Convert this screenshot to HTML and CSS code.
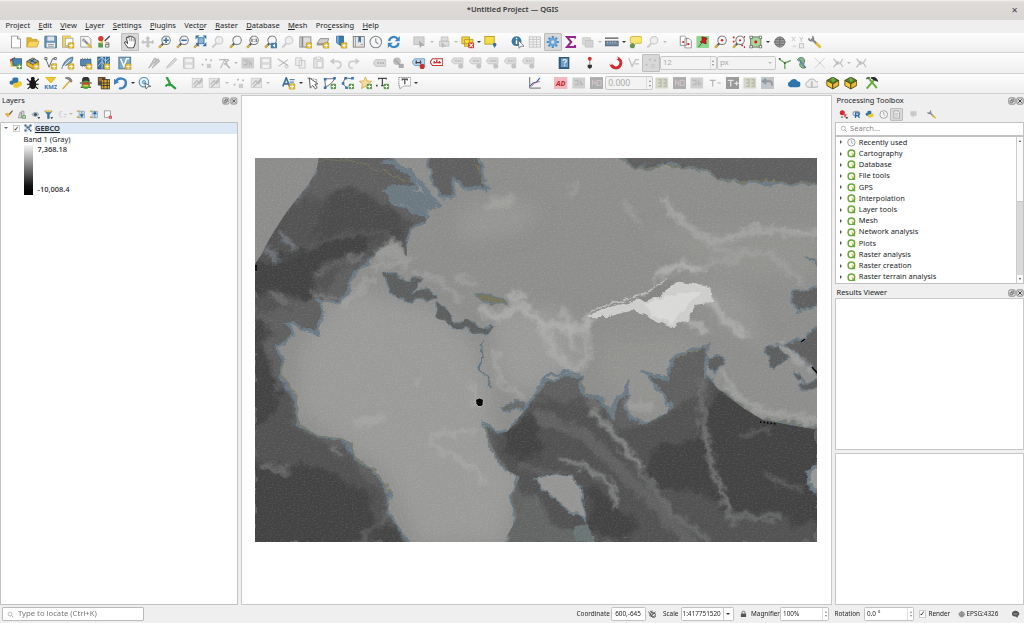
FILE: index.html
```html
<!DOCTYPE html>
<html lang="en">
<head>
<meta charset="utf-8">
<title>*Untitled Project — QGIS</title>
<link rel="stylesheet" href="styles.css">
</head>
<body>
<svg class="sprite" aria-hidden="true">
<defs>
<symbol id="plus" viewBox="0 0 16 16"><rect x="8.500" y="9" width="7" height="6.500" rx="1" fill="#e6bd2e" stroke="#b08a1a" stroke-width=".7"/><path d="M12 10v4.500M9.700 12.200h4.600" stroke="#fff" stroke-width="1.300"/></symbol>
<symbol id="gplus" viewBox="0 0 16 16"><rect x="9" y="9" width="6.500" height="6.500" rx="1.500" fill="#5c9a4c"/><path d="M12.200 10v4.500M10 12.200h4.500" stroke="#fff" stroke-width="1.200"/></symbol>
<symbol id="lens" viewBox="0 0 16 16"><path d="M6.500 9.500 1.500 14.500" stroke="#555" stroke-width="2.400"/><path d="M4.500 11.800 1.200 15" stroke="#e0b93a" stroke-width="2"/><circle cx="9.500" cy="6" r="5" fill="#f4f6f7" stroke="#77797b" stroke-width="1.200"/></symbol>
<symbol id="glens" viewBox="0 0 16 16"><path d="M6.500 9.500 1.500 14.500" stroke="#ccc" stroke-width="2.400"/><circle cx="9.500" cy="6" r="4.500" fill="#eee" stroke="#c8c8c8" stroke-width="1.200"/></symbol>
<symbol id="new" viewBox="0 0 16 16"><path d="M3 1h7l3.500 3.500V15H3z" fill="#fff" stroke="#8a8c8c"/><path d="M10 1v3.500h3.500" fill="#ddd" stroke="#8a8c8c"/></symbol>
<symbol id="open" viewBox="0 0 16 16"><path d="M1 14V3h5l1.500 2H13v3" fill="#e2b72e" stroke="#b8902a" stroke-width=".8"/><path d="M1 14 3.500 7H15.500L13 14z" fill="#f6d65e" stroke="#c39b2e" stroke-width=".8"/></symbol>
<symbol id="save" viewBox="0 0 16 16"><rect x="1" y="1" width="14" height="14" rx="1" fill="#6b96b8" stroke="#456c8c"/><rect x="4" y="1.500" width="8" height="5" fill="#dfe5e9"/><rect x="3" y="9" width="10" height="5.500" fill="#f1f1f1"/><path d="M4.500 11h7M4.500 13h7" stroke="#888"/></symbol>
<symbol id="layout" viewBox="0 0 16 16"><rect x="2" y="1" width="9" height="13" fill="#f7e8a2" stroke="#8c8c7a"/><rect x="5" y="3.500" width="9" height="9" fill="#fff" stroke="#9a9a9a"/><path d="M2 1h10v2H4v11H2z" fill="#efcf4e"/><use href="#plus"/></symbol>
<symbol id="manager" viewBox="0 0 16 16"><path d="M2 1.500h9l3 3V14H2z" fill="#f6f6f6" stroke="#999"/><path d="m5 5 9 9" stroke="#858a8e" stroke-width="2.500"/><path d="m10 10 5 5" stroke="#e2b93c" stroke-width="2.400"/><circle cx="5.500" cy="5.500" r="2" fill="#aab"/></symbol>
<symbol id="style" viewBox="0 0 16 16"><circle cx="4.500" cy="4" r="3.200" fill="#d43a2e"/><path d="m9 7 6-6" stroke="#444" stroke-width="1.500"/><rect x="1.500" y="9" width="5.500" height="5.500" fill="#4f9a4d"/><rect x="4" y="7" width="3" height="3" fill="#e4b62d"/><path d="M10 9h4v5h-4v-3h4" fill="none" stroke="#666"/></symbol>
<symbol id="hand" viewBox="0 0 16 16"><path d="M6 15C4 12 1 9 2 8s2 0 3.500 2L4 3.500c0-1.500 1.500-1.500 2 0V2c0-1.500 2-1.500 2 0 0-1.300 2-1.300 2.200.4 0-1 1.800-.8 1.800.6 1-.6 2 0 2 1.200C15 9 14 12 12 15z" fill="#fff" stroke="#333" stroke-width="1.100"/><path d="M8 2.500v4.500M10 3v4M12 4v3.500" stroke="#555" stroke-width=".7"/></symbol>
<symbol id="pan" viewBox="0 0 16 16"><path d="M8 1l3 3H9.500v3H13V5l3 3-3 3V9.500H9.500V12H11l-3 3-3-3h1.500V9.500H3V11L0 8l3-3v2h3.500V4H5z" fill="#c4c4c4"/></symbol>
<symbol id="zin" viewBox="0 0 16 16"><use href="#lens"/><path d="M9.500 2.800v6.400M6.300 6h6.400" stroke="#346ea5" stroke-width="1.800"/></symbol>
<symbol id="zout" viewBox="0 0 16 16"><use href="#lens"/><path d="M6.300 6h6.400" stroke="#346ea5" stroke-width="1.800"/></symbol>
<symbol id="full" viewBox="0 0 16 16"><path d="M6.500 9.500 1.500 14.500" stroke="#555" stroke-width="2.400"/><path d="M4.500 11.800 1.200 15" stroke="#e0b93a" stroke-width="2"/><path d="M3 0h5L3 5zM16 0h-5l5 5zM16 13h-5l5-5zM3 8l5 5H5z" fill="#3673a8"/><rect x="6" y="3" width="7" height="7" fill="#8eb4d4" stroke="#3673a8"/></symbol>
<symbol id="z11" viewBox="0 0 16 16"><use href="#lens"/><path d="M7 4v4M9.500 4.500v.8M9.500 6.800v.8M12 4v4" stroke="#333"/></symbol>
<symbol id="zlast" viewBox="0 0 16 16"><use href="#lens"/><rect x="8" y="9" width="7.500" height="6.500" fill="#3f7cb2"/><path d="m13 10-3 2.200 3 2.300z" fill="#fff"/></symbol>
<symbol id="mapview" viewBox="0 0 16 16"><rect x="1" y="2" width="13" height="12" fill="#ddd" stroke="#888"/><path d="M4 2v12" stroke="#888" stroke-width="2"/><use href="#plus"/></symbol>
<symbol id="view3d" viewBox="0 0 16 16"><path d="M1 10 5 4h10l-2 6z" fill="#cfcfcf" stroke="#888"/><path d="M1 10h12v2H1z" fill="#999"/><use href="#plus"/></symbol>
<symbol id="bookmark" viewBox="0 0 16 16"><path d="M3 1h8v13l-4-2.500L3 9z" fill="#3b7ab0" stroke="#29557c"/><path d="M3 1h2.500v10L3 9z" fill="#7bb0d8"/><use href="#plus"/></symbol>
<symbol id="bookmarks" viewBox="0 0 16 16"><rect x="1.500" y="1.500" width="13" height="12.500" fill="#e5e5e5" stroke="#777"/><path d="M4 2v12M10 11h3" stroke="#999"/><path d="M7.500 1.500h3V9L9 7.500 7.500 9z" fill="#386f9c"/></symbol>
<symbol id="clock" viewBox="0 0 16 16"><circle cx="8" cy="8" r="6.800" fill="#f6f6f6" stroke="#858a8d" stroke-width="1.300"/><path d="M8 3.500V8l3 2.500" fill="none" stroke="#858a8d" stroke-width="1.200"/></symbol>
<symbol id="refresh" viewBox="0 0 16 16"><path d="M2.500 7C3 1.500 10 .500 12.500 4.500M13.500 9C13 14.500 6 15.500 3.500 11.500" fill="none" stroke="#3b87c2" stroke-width="2.600"/><path d="M15 1v6H9zM1 15V9h6z" fill="#3b87c2"/></symbol>
<symbol id="gsel" viewBox="0 0 16 16"><rect x="1" y="2" width="12" height="9" fill="#d4d4d4" stroke="#bbb"/><path d="m7 6 1 9 2.500-2.500L14 13z" fill="#aaa"/></symbol>
<symbol id="gform" viewBox="0 0 16 16"><path d="M5 2h8v5H5zM3 7h11v6H3z" fill="#ddd" stroke="#c2c2c2"/><path d="m5 8 1 7 2-2h3z" fill="#bbb"/></symbol>
<symbol id="desel" viewBox="0 0 16 16"><path d="M1 2h9v8H1zM4 5h10v8H4z" fill="#f5d73f" stroke="#b39824"/><rect x="8.500" y="8.500" width="7" height="7" rx="1.500" fill="#d33a32"/><path d="m10 10 4 4m0-4-4 4" stroke="#fff" stroke-width="1.200"/></symbol>
<symbol id="selloc" viewBox="0 0 16 16"><rect x="1" y="1.500" width="11" height="9" fill="#f5df45" stroke="#b39824"/><path d="M12.500 15c-1-2-2-2.500-2-4a2 2 0 0 1 4.200 0c0 1.500-1.200 2-2.200 4z" fill="#3470a6"/></symbol>
<symbol id="info" viewBox="0 0 16 16"><circle cx="6.500" cy="7" r="5.800" fill="#3a76a9"/><path d="M6.500 6v4.500M6.500 3v1.800" stroke="#fff" stroke-width="1.800"/><path d="m8.500 6 1 9.500 2-2.500h4z" fill="#fff" stroke="#555" stroke-width=".8"/></symbol>
<symbol id="table" viewBox="0 0 16 16"><rect x="1.500" y="2" width="13" height="12" fill="#f4f4f4" stroke="#bbb"/><path d="M1.500 5h13M1.500 8h13M1.500 11h13M6 2v12M10 2v12" stroke="#c4c4c4"/></symbol>
<symbol id="gear" viewBox="0 0 16 16"><path d="M8 .800v14.400M.800 8h14.400M3 3l10 10M13 3 3 13" stroke="#4d8ec6" stroke-width="2.600"/><circle cx="8" cy="8" r="4.800" fill="#69a5d8"/><circle cx="8" cy="8" r="2" fill="#d8dfe5"/></symbol>
<symbol id="sigma" viewBox="0 0 16 16"><path d="M13 4V2H3.500l5 6-5 6H13v-2.500" fill="none" stroke="#94268f" stroke-width="2.400"/></symbol>
<symbol id="ruler" viewBox="0 0 16 16"><rect x="0" y="7" width="16" height="5.500" fill="#6e89a1" stroke="#4e5d6a"/><path d="M0 3.500h16" stroke="#555" stroke-width="1.600"/><path d="M3 7.500v2M6 7.500v2M9 7.500v2M12 7.500v2" stroke="#c8d6e1" stroke-width=".7"/></symbol>
<symbol id="tip" viewBox="0 0 16 16"><path d="M4 1.500h9a2.500 2.500 0 0 1 2.500 2.500v3A2.500 2.500 0 0 1 13 9.500H8.500L5 13V9.500H4A2.500 2.500 0 0 1 1.500 7V4A2.500 2.500 0 0 1 4 1.500z" fill="#f8e672" stroke="#c7ae3a"/><circle cx="4" cy="12.500" r="3" fill="#699156"/></symbol>
<symbol id="gmisc" viewBox="0 0 16 16"><path d="M2 3h9v8H2z" fill="#dcdcdc" stroke="#c6c6c6"/><path d="M5 6h9v8H5z" fill="#d2d2d2" stroke="#c0c0c0"/></symbol>
<symbol id="copyred" viewBox="0 0 16 16"><path d="M1.500 1h5L9 3.500V12H1.500zM7 4h5l2.500 2.500V15H7z" fill="#fff" stroke="#858585"/><circle cx="5" cy="8" r="1.300" fill="#d22"/><circle cx="11" cy="10.500" r="1.400" fill="#d22"/></symbol>
<symbol id="pin" viewBox="0 0 16 16"><rect x=".5" y="1" width="15" height="14" fill="#8fd68d"/><path d="m7 9-4 5" stroke="#444"/><path d="m7 2 6 1.500-1.500 3L12 10 5 8l2.500-2z" fill="#c91f22" stroke="#8d1818"/></symbol>
<symbol id="lensred" viewBox="0 0 16 16"><use href="#lens"/><circle cx="9.500" cy="6" r="1.500" fill="#d22"/></symbol>
<symbol id="lensred2" viewBox="0 0 16 16"><use href="#lens"/><circle cx="9.500" cy="6" r="1.300" fill="#d22"/><path d="M1 2.500h2M1 7.500h2M14 2h2M11 12h2M14 14h2" stroke="#d22" stroke-width="2"/></symbol>
<symbol id="extent" viewBox="0 0 16 16"><rect x="2" y="2" width="12" height="12" fill="#a8d69a" stroke="#5e7358"/><path d="M1 1h3v3H1zM12 1h3v3h-3zM1 12h3v3H1zM12 12h3v3h-3z" fill="#fff" stroke="#666"/><circle cx="8" cy="8" r="1.700" fill="#d11"/></symbol>
<symbol id="globe" viewBox="0 0 16 16"><circle cx="8" cy="8" r="6" fill="#9b9b9b" stroke="#6b6b6b"/><path d="M1 8h14M8 2v12M3 5h10M3 11h10" stroke="#6b6b6b"/></symbol>
<symbol id="xy" viewBox="0 0 16 16"><path d="m1 2 4 5m0-5-4 5M10 2l2 3 2-3M12 5v3M2 13h4" fill="none" stroke="#c2c2c2"/><rect x="10" y="10" width="5" height="5" fill="#eee" stroke="#bbb"/></symbol>
<symbol id="wrench" viewBox="0 0 16 16"><path d="m4 4 7 7" stroke="#84888a" stroke-width="2.600"/><path d="M1 3.500C1 5 2 6.500 4.500 6.500S7 3 5 1" fill="none" stroke="#84888a" stroke-width="2"/><path d="m9.500 9.500 5.500 5" stroke="#e1bb3b" stroke-width="3.300"/></symbol>
<symbol id="dsm" viewBox="0 0 16 16"><path d="m1 4 6-3 3 9-7 2z" fill="#d4493b"/><path d="M2 6h8v6H2z" fill="#e5b72b"/><path d="M4 3h11v8H5z" fill="#4784b6" stroke="#2c5c87"/><use href="#gplus"/></symbol>
<symbol id="gpkg" viewBox="0 0 16 16"><path d="m1 6 7-4 7 4-7 4z" fill="#7aa6cb" stroke="#6b5a22"/><path d="M1 6v5l7 4 7-4V6l-7 4z" fill="#ebb92f" stroke="#7d671f"/><path d="m4 4 8 4M5 7l5-4" stroke="#333"/><use href="#plus"/></symbol>
<symbol id="vec" viewBox="0 0 16 16"><path d="M2 2.500 6 13 10 3h4" fill="none" stroke="#53646c" stroke-width="1.100"/><path d="M1 1.500h2.500V4H1zM12 1.500h2.500V4H12z" fill="#fff" stroke="#555"/><use href="#plus"/></symbol>
<symbol id="feather" viewBox="0 0 16 16"><path d="M1 15C3 6 8 2 14 1c0 6-3 9-11 10" fill="#81a9c9" stroke="#48677f"/><path d="M2 13 11 4" stroke="#fff"/><use href="#plus"/></symbol>
<symbol id="chip" viewBox="0 0 16 16"><rect x="2" y="4" width="12" height="7" fill="#528ab8" stroke="#35617f"/><path d="M4 2v2M7 2v2M10 2v2M13 2v2M4 11v2M7 11v2" stroke="#777"/><use href="#plus"/></symbol>
<symbol id="mesh" viewBox="0 0 16 16"><rect x="1" y="1" width="14" height="14" fill="#3e75a6" stroke="#294f72"/><path d="m1 5 5-4 4 5 5-4M1 12l5-6 4 6 5-7M6 1v14M10 1v14" stroke="#b9d2e6" fill="none"/><use href="#plus"/></symbol>
<symbol id="virt" viewBox="0 0 16 16"><rect x="1" y="1" width="14" height="14" fill="#7da9cc" stroke="#476f91"/><path d="M3 3 7 12 10 3h3" fill="none" stroke="#fff" stroke-width="1.800"/><use href="#plus"/></symbol>
<symbol id="pencil" viewBox="0 0 16 16"><path d="M2 14 4 10 12 2l2 2-8 8z" fill="#d8d8d8" stroke="#bdbdbd"/></symbol>
<symbol id="pencils" viewBox="0 0 16 16"><path d="m2 14 7-12 3 2zM6 14l7-11 2 3z" fill="#c8c8c8" stroke="#aaa"/></symbol>
<symbol id="gsave" viewBox="0 0 16 16"><rect x="2" y="2" width="12" height="12" fill="#d9d9d9" stroke="#bbb"/><path d="M4 3h8v4H4zM4 10h8v4H4z" fill="#f2f2f2"/></symbol>
<symbol id="gdots" viewBox="0 0 16 16"><path d="M2 9h2v2H2zM6 3h2v2H6zM12 4h2v2h-2z" fill="#b5b5b5"/><rect x="8" y="9" width="5" height="5" fill="#ccc"/></symbol>
<symbol id="gnode" viewBox="0 0 16 16"><path d="M1 4h11M3 14 8 4l3 6M13 4l-6 6" stroke="#bcbcbc" stroke-width="1.300" fill="none"/><path d="m8 8 6 6" stroke="#bbb" stroke-width="2"/></symbol>
<symbol id="cut" viewBox="0 0 16 16"><path d="M2 3 14 11M14 4 3 12" stroke="#bbb" stroke-width="1.300"/><circle cx="12.500" cy="12" r="1.800" fill="none" stroke="#bbb"/></symbol>
<symbol id="gcopy" viewBox="0 0 16 16"><path d="M2 2h7v9H2zM6 5h7v9H6z" fill="#efefef" stroke="#c2c2c2"/></symbol>
<symbol id="gpaste" viewBox="0 0 16 16"><path d="M2 2h11v12H2z" fill="#e4e4e4" stroke="#c2c2c2"/><path d="M5 1h5v3H5zM6 6h6v7H6z" fill="#f6f6f6" stroke="#c6c6c6"/></symbol>
<symbol id="gundo" viewBox="0 0 16 16"><path d="M3 6h7q4 0 4 4t-5 4" fill="none" stroke="#ccc" stroke-width="2"/><path d="M6 2 1 6l5 4z" fill="#c8c8c8"/></symbol>
<symbol id="gredo" viewBox="0 0 16 16"><path d="M13 6H6q-4 0-4 4t5 4" fill="none" stroke="#d0d0d0" stroke-width="2"/><path d="m10 2 5 4-5 4z" fill="#ccc"/></symbol>
<symbol id="gtag" viewBox="0 0 16 16"><path d="m0 8 3-4h12v8H3z" fill="#dadada" stroke="#c3c3c3"/><path d="M5 8h8" stroke="#aaa" stroke-width="2" stroke-dasharray="2 1"/></symbol>
<symbol id="gtag2" viewBox="0 0 16 16"><path d="m0 6 3-4h11v7H3z" fill="#dcdcdc" stroke="#c8c8c8"/><path d="M5 5.500h7" stroke="#bbb" stroke-width="2" stroke-dasharray="2 1"/><circle cx="11.500" cy="11.500" r="3" fill="#c4c4c4"/></symbol>
<symbol id="ball" viewBox="0 0 16 16"><circle cx="7" cy="6" r="4.500" fill="#bbb"/><path d="M9 9h6v5H9z" fill="#aaa"/><path d="M4 4l6 6" stroke="#888"/></symbol>
<symbol id="tagblue" viewBox="0 0 16 16"><path d="m0 7 3-4h12v8H3z" fill="#b9d6ef" stroke="#6996ba"/><path d="M4 7.500h7M5 5v4M10 5v4" stroke="#444" stroke-width="1.500"/><circle cx="12" cy="12" r="3" fill="#c53232"/></symbol>
<symbol id="tagred" viewBox="0 0 16 16"><path d="m0 7 3-4h12v8H3z" fill="#fff" stroke="#c93030" stroke-width="1.200"/><path d="M4 7.500h9M5 5.500v3M8 4v4M11 5.500v3" stroke="#c93030" stroke-width="1.500"/></symbol>
<symbol id="help" viewBox="0 0 16 16"><path d="M2 1h12.500v14H2z" fill="#2e5778"/><path d="M4.500 2.500H13V13H4.500z" fill="#6d9fca"/><path d="M7 5.500c0-2 4-2 4 0 0 1.500-2 1.300-2 3M9 10v1.500" stroke="#fff" stroke-width="1.200" fill="none"/></symbol>
<symbol id="pole" viewBox="0 0 16 16"><path d="M8 4v9" stroke="#999" stroke-width="1.300"/><circle cx="8" cy="3" r="2.300" fill="#d03434"/><path d="M5.500 10h5v3l-2.500 2-2.500-2z" fill="#333"/></symbol>
<symbol id="magnet" viewBox="0 0 16 16"><path d="M2 9c2 5 8 7 11 2s-1-8-4-9" fill="none" stroke="#cc2c30" stroke-width="3.500"/><path d="m1 9 3-1M8 3l2-2" stroke="#eee" stroke-width="3"/></symbol>
<symbol id="gvec" viewBox="0 0 16 16"><path d="M2 2 6 12 10 4h4M9 9h5" fill="none" stroke="#c4c4c4" stroke-width="1.600"/></symbol>
<symbol id="gcross" viewBox="0 0 16 16"><path d="M2 2 14 14M14 2 2 14" stroke="#cbcbcb"/><path d="M7 7h2v2H7z" fill="#ccc"/></symbol>
<symbol id="gx2" viewBox="0 0 16 16"><path d="m3 3 4 5h4l3-5M3 13l4-5M11 8l3 5" fill="none" stroke="#c2c2c2" stroke-width="1.500"/><path d="M6 6h3v4H6z" fill="#bdbdbd"/></symbol>
<symbol id="topo" viewBox="0 0 16 16"><path d="M8 15V8L1 3M8 8l7-3" fill="none" stroke="#6eab63" stroke-width="1.700"/><path d="M1 2h2v2H1zM7 7h2v2H7z" fill="#444"/></symbol>
<symbol id="trace" viewBox="0 0 16 16"><path d="M3 4c3-5 10-2 8 3s0 5 2 6c-4 3-9-1-7-5S3 7 3 4z" fill="#8bb680" stroke="#526f59"/><path d="m5 4 7 9" stroke="#4888bb" stroke-width="1.500"/></symbol>
<symbol id="python" viewBox="0 0 16 16"><path d="M4 5V3c0-2 7-2 7 0v4c0 1.500-6 0-6 3H3C0 10 0 5 3 5h5" fill="#3772a4"/><path d="M12 8v4c0 2-7 2-7 0V9c0-1.500 6-.5 6-3h2c3 0 3 6 0 6H8" fill="#edc936"/></symbol>
<symbol id="bug" viewBox="0 0 16 16"><ellipse cx="8" cy="9.500" rx="4" ry="5.500" fill="#181818"/><circle cx="8" cy="3" r="2.300" fill="#181818"/><path d="M1 3l4 4M15 3l-4 4M1 9.500h14M2 15l4-4M14 15l-4-4" stroke="#181818" stroke-width="1.300"/></symbol>
<symbol id="kmz" viewBox="0 0 16 16"><path d="m2 1 12 0-6 7z" fill="#f4c822" stroke="#d5a817"/><text x="8" y="15.500" text-anchor="middle" class="kmz">KMZ</text></symbol>
<symbol id="hammer" viewBox="0 0 16 16"><path d="m2 15 8-9" stroke="#ddb247" stroke-width="2"/><path d="M5 2c4-2 7 0 8 4L11.500 7 9 4z" fill="#8c8c88" stroke="#6f6f6c"/></symbol>
<symbol id="beetle" viewBox="0 0 16 16"><circle cx="8" cy="5" r="4.500" fill="#333"/><path d="M1 8h14M2 13h12" stroke="#222" stroke-width="1.400"/><ellipse cx="8" cy="10" rx="5" ry="5" fill="#4aa335"/><path d="M4 7h8v3H4z" fill="#c5452f"/><path d="M5 11h6" stroke="#e1c638" stroke-width="2"/></symbol>
<symbol id="raster" viewBox="0 0 16 16"><path d="M1 1h9v10H1z" fill="#554b3d"/><path d="M5 4h10v11H5z" fill="#e2a92c" stroke="#333"/><path d="M5 8h10M5 11h10M8 4v11M12 4v11" stroke="#333"/><path d="M2 2h4v4H2z" fill="#a9683c"/></symbol>
<symbol id="bluearrow" viewBox="0 0 16 16"><path d="M2.500 6C5 1 14 2 14 8s-6 7-8 6" fill="none" stroke="#3e82c0" stroke-width="2.800"/><path d="M0 3v7l6-3z" fill="#3e82c0"/></symbol>
<symbol id="target" viewBox="0 0 16 16"><circle cx="7" cy="7" r="5.500" fill="none" stroke="#5294c8" stroke-width="1.500"/><circle cx="7" cy="7" r="2" fill="#a8c9e4" stroke="#5294c8"/><path d="m8 8 1.500 7 2-2.500 3.500-.5z" fill="#fff" stroke="#555"/></symbol>
<symbol id="plant" viewBox="0 0 16 16"><path d="M3 1c2 3 4 6 4.500 10M8 10l6 5M7.500 11C5 9 3 10 2 12" fill="none" stroke="#2f9e3e" stroke-width="2.600"/></symbol>
<symbol id="gedit" viewBox="0 0 16 16"><rect x="1.500" y="2.500" width="12" height="11" fill="#e6e6e6" stroke="#ccc"/><path d="m4 13 9-10M3 10l4-5 3 4 3-4" fill="none" stroke="#bababa" stroke-width="1.400"/></symbol>
<symbol id="anno" viewBox="0 0 16 16"><path d="M1 12 5 2l4 10M3 9h4.500" stroke="#3b719f" stroke-width="2" fill="none"/><path d="M9 4h6M9 7h5" stroke="#5a8bb2" stroke-width="1.600"/><use href="#plus"/></symbol>
<symbol id="selarrow" viewBox="0 0 16 16"><path d="m2 2 11 2-3 9z" fill="none" stroke="#888" stroke-dasharray="2 1"/><path d="m4 2 1 12 3-3 3 4 2-1.500-2.500-4L14 9z" fill="#fff" stroke="#444"/></symbol>
<symbol id="polyan" viewBox="0 0 16 16"><path d="M2 3h12l-5 6-6 4z" fill="#fff" stroke="#556" /><path d="M1 2h3v3H1zM12 1h3v3h-3zM1 12h3v3H1z" fill="#2c71b0"/><use href="#gplus"/></symbol>
<symbol id="linean" viewBox="0 0 16 16"><path d="M13 3 5 2 2 9l5 5" fill="none" stroke="#556"/><path d="M12 1h3v3h-3zM4 1h3v3H4zM1 7h3v3H1zM5 12h3v3H5z" fill="#2c71b0"/><use href="#gplus"/></symbol>
<symbol id="star" viewBox="0 0 16 16"><path d="m7.500 1 2 4.500 5 .5-3.800 3.500 1 5-4.200-2.500-4.500 2.500 1-5L.500 6l5-.5z" fill="#f4dc9c" stroke="#d4a94a"/><use href="#gplus"/></symbol>
<symbol id="textan" viewBox="0 0 16 16"><path d="M3 4V2.500h9V4M7.500 2.500V11M6 11h3" fill="none" stroke="#444" stroke-width="1.400"/><path d="M0 10h2v2H0z" fill="#555"/><use href="#gplus"/></symbol>
<symbol id="balloon" viewBox="0 0 16 16"><path d="M1 1.500h14v10H7L2 15v-3.500H1z" fill="#fafafa" stroke="#888" stroke-dasharray="2 .6"/><path d="M5 5V3.500h6V5M8 3.500v6" fill="none" stroke="#444" stroke-width="1.400"/></symbol>
<symbol id="chart" viewBox="0 0 16 16"><path d="M2 1v13h13" fill="none" stroke="#555"/><path d="m2 12 4-4 4-1 4-5" fill="none" stroke="#3b68ad" stroke-width="1.400"/><path d="m4 12 4-4 6-2" fill="none" stroke="#c25870"/></symbol>
<symbol id="ad" viewBox="0 0 16 16"><rect x="0" y="1" width="16" height="14" fill="#f1b9bd"/><text x="8" y="11.300" text-anchor="middle" class="ad">AD</text></symbol>
<symbol id="gbox" viewBox="0 0 16 16"><rect x=".5" y="1.500" width="15" height="13" fill="#cfcfcf"/><path d="M3 5h4v5H3M10 5v6M9 6l4 4" stroke="#b8b8b8" fill="none" stroke-width="1.500"/></symbol>
<symbol id="gbox2" viewBox="0 0 16 16"><rect x="0" y="1" width="16" height="14" fill="#adadad"/><path d="M3 11V5l4 5 0-5M9 5h4v6H9z" stroke="#cfc2c4" fill="none" stroke-width="1.300"/></symbol>
<symbol id="gbox3" viewBox="0 0 16 16"><rect x=".5" y="1.500" width="15" height="13" fill="#d4d7c5"/><path d="M4 4h3v8H4M10 4h3v8h-3M4 8h3M10 8h3" stroke="#b8bba9" fill="none" stroke-width="1.500"/></symbol>
<symbol id="tminus" viewBox="0 0 16 16"><path d="M2 5h7M5.500 5v7M11 8h4" stroke="#b4b4b4" stroke-width="1.400"/></symbol>
<symbol id="tplus" viewBox="0 0 16 16"><rect y="1" width="16" height="14" fill="#999"/><path d="M2 5h7M5.500 5v7M10 8.500h5M12.500 6v5" stroke="#e4e4e4" stroke-width="1.500"/></symbol>
<symbol id="gback" viewBox="0 0 16 16"><rect y="1" width="16" height="14" fill="#bfc5c9"/><path d="M2 6h8q3 0 3 5M6 3 2 6l4 3" fill="none" stroke="#90989d" stroke-width="2.200"/></symbol>
<symbol id="cloud" viewBox="0 0 16 16"><path d="M4 13a3.500 3.500 0 0 1-.5-6.800A5 5 0 0 1 12.500 6a3.500 3.500 0 0 1 0 7z" fill="#2f75ad"/></symbol>
<symbol id="gcloud" viewBox="0 0 16 16"><path d="M4 13a3.500 3.500 0 0 1-.5-6.800A5 5 0 0 1 12.500 6a3.500 3.500 0 0 1 0 7z" fill="#eee" stroke="#c6c6c6" stroke-width="1.500"/><path d="M8 6v7" stroke="#bbb" stroke-width="2"/></symbol>
<symbol id="box" viewBox="0 0 16 16"><path d="m1 5 7-4 7 4-7 4z" fill="#56802b" stroke="#4b3a16"/><path d="M1 5v6l7 4V9z" fill="#f1ca37" stroke="#4b3a16"/><path d="M15 5v6l-7 4V9z" fill="#e2b932" stroke="#4b3a16"/><path d="m8 1 3 4-3 2-2-3z" fill="#5db43c"/></symbol>
<symbol id="tools" viewBox="0 0 16 16"><path d="M2 14.500 11 4M4 2l10 12" stroke="#69ab3c" stroke-width="2.300"/><path d="m1.500 3 4-2" stroke="#555" stroke-width="2"/><path d="M7 2c3-2 6-1 8 4l-5-2z" fill="#272727" stroke="#272727"/></symbol>
<symbol id="brush" viewBox="0 0 16 16"><path d="m1 6 6 7L9 8z" fill="#d95b38"/><path d="M3 6c3-3 6 0 7 3l-4 4z" fill="#eabc31"/><path d="m9 8 6-7" stroke="#7b5524" stroke-width="2.200"/></symbol>
<symbol id="group" viewBox="0 0 16 16"><path d="M2 14 5 4h2v10M8 14V2h4v10M2 14h10" fill="#ddd" stroke="#777"/><use href="#gplus"/></symbol>
<symbol id="eye" viewBox="0 0 16 16"><path d="M1 8q7-8 13 0-6 7-13 0z" fill="#b9cad8" stroke="#728da3"/><circle cx="7.500" cy="8" r="2.800" fill="#3a5063"/><path d="M11 13h5l-2.500 3z" fill="#222"/></symbol>
<symbol id="filter" viewBox="0 0 16 16"><path d="M1 2h13L9 8v7H6V8z" fill="#347aae" stroke="#275a80"/><path d="M2 1.500h11V4H2z" fill="#edc83c"/><path d="M11 13h5l-2.500 3z" fill="#222"/></symbol>
<symbol id="epsilon" viewBox="0 0 16 16"><path d="M7 3C1 1 1 7 5 7 0 8 2 14 7 12M10 8h5M10 12h4" fill="none" stroke="#c6c6c6" stroke-width="1.400"/></symbol>
<symbol id="expand" viewBox="0 0 16 16"><path d="M1 2h5M1 13h5" stroke="#caa53b" stroke-width="2.500"/><rect x="5" y="2" width="10" height="12" fill="#cbdce9" stroke="#7898b0"/><path d="M10 2v7M7 8h6l-3 5z" fill="#276ba2" stroke="#276ba2"/></symbol>
<symbol id="collapse" viewBox="0 0 16 16"><path d="M1 2h5M1 13h5" stroke="#caa53b" stroke-width="2.500"/><rect x="5" y="2" width="10" height="12" fill="#cbdce9" stroke="#7898b0"/><path d="M10 14V7M7 7h6l-3-5z" fill="#276ba2" stroke="#276ba2"/></symbol>
<symbol id="remove" viewBox="0 0 16 16"><rect x="2" y="1.500" width="11" height="11.500" fill="#fafafa" stroke="#888" stroke-width="1.300"/><rect x="10" y="10" width="6" height="5.500" rx="1" fill="#ce4949"/><path d="M11.500 12.700h3" stroke="#fff"/></symbol>
<symbol id="float" viewBox="0 0 8 8"><rect x=".8" y=".8" width="6.400" height="6.400" rx="1.300" fill="#e4e4e4" stroke="#777" stroke-width=".8"/><path d="M2.200 5.800V3.600h2.200v2.200zM3.600 3.400V2.200h2.200v2.200H4.600" fill="none" stroke="#555" stroke-width=".7"/></symbol>
<symbol id="close" viewBox="0 0 8 8"><rect x=".8" y=".8" width="6.400" height="6.400" rx="1.300" fill="#ddd" stroke="#777" stroke-width=".8"/><path d="m2.300 2.300 3.400 3.400m0-3.400L2.300 5.700" stroke="#444"/></symbol>
<symbol id="q" viewBox="0 0 16 16"><circle cx="8" cy="8" r="6" fill="#fff" stroke="#6aa637" stroke-width="2.800"/><path d="m10 10 4.500 5" stroke="#6aa637" stroke-width="3"/><path d="M7 7h4.500v4.500z" fill="#e5c54a"/></symbol>
<symbol id="recent" viewBox="0 0 16 16"><circle cx="8" cy="8" r="6.800" fill="#fafafa" stroke="#909090" stroke-width="1.600"/><path d="M8 4v4.500l3 1.500" fill="none" stroke="#909090" stroke-width="1.300"/></symbol>
<symbol id="models" viewBox="0 0 16 16"><circle cx="5.500" cy="5" r="4.500" fill="#d22c32"/><path d="M8 7h5l-1 6H9z" fill="#d7626a"/><path d="M3 11h4v3H3z" fill="#999"/><path d="M11 13h5l-2.500 3z" fill="#222"/></symbol>
<symbol id="rlang" viewBox="0 0 16 16"><ellipse cx="7.500" cy="6.500" rx="6" ry="4" fill="none" stroke="#9ba2ab" stroke-width="2"/><path d="M6 14V5h5q3 3-1 4.500L6 9.500m4 0 3 4.500" fill="none" stroke="#246bb0" stroke-width="2.200"/></symbol>
<symbol id="doc" viewBox="0 0 16 16"><path d="M3 1.500h7l3 3V14.500H3z" fill="#eee" stroke="#888"/><path d="M5 6h6M5 8.500h6M5 11h6" stroke="#aaa"/></symbol>
<symbol id="gbubble" viewBox="0 0 16 16"><path d="M2 2h11v8H8v4L5 10H2z" fill="#c9c9c9"/></symbol>
<symbol id="search" viewBox="0 0 16 16"><circle cx="7" cy="7" r="4.500" fill="none" stroke="#999" stroke-width="1.400"/><path d="m10.500 10.500 4 4" stroke="#999" stroke-width="1.800"/></symbol>
<symbol id="rast" viewBox="0 0 16 16"><path d="M1 1h14v14H1z" fill="#dbe6ee"/><path d="M1 1h4v4H1zM5 5h4v4H5zM11 1h4v4h-4zM9 9h3v3H9zM1 11h4v4H1zM12 12h3v3h-3zM9 5h3v2H9z" fill="#385d7a"/></symbol>
<symbol id="lock" viewBox="0 0 16 16"><rect x="2" y="7" width="12" height="8" rx="1" fill="#555"/><path d="M4.500 7V5a3.500 3.500 0 0 1 7 0v2" fill="none" stroke="#555" stroke-width="1.800"/></symbol>
<symbol id="mouse" viewBox="0 0 16 16"><path d="m1 3 6 10M4 2l9 5M8 1 3 11M5 13l9-10M8 14l6-4" stroke="#444" stroke-width="1.600"/><circle cx="11" cy="10" r="4" fill="none" stroke="#555" stroke-width="1.500"/></symbol>
<symbol id="crs" viewBox="0 0 16 16"><path d="M8 1v14M0 8h16" stroke="#666"/><circle cx="8" cy="8" r="5.500" fill="#bbb" stroke="#666"/><path d="M3 8h10M8 3v10M4 5h8M4 11h8" stroke="#666"/></symbol>
<symbol id="msg" viewBox="0 0 16 16"><path d="M2 4q6-5 12 0 3 4-1 7l-2 4-2-3Q-1 13 2 4z" fill="#555"/><path d="M4 6.500h8M4 8.800h7" stroke="#bbb" stroke-width=".8"/></symbol>
</defs>
</svg>

<div class="window">
<header class="titlebar"><span class="title">*Untitled Project — QGIS</span><span class="winclose">✕</span></header>
<nav class="menubar"><span>Pro<u>j</u>ect</span><span><u>E</u>dit</span><span><u>V</u>iew</span><span><u>L</u>ayer</span><span><u>S</u>ettings</span><span><u>P</u>lugins</span><span>Vect<u>o</u>r</span><span><u>R</u>aster</span><span><u>D</u>atabase</span><span><u>M</u>esh</span><span>Pro<u>c</u>essing</span><span><u>H</u>elp</span></nav>

<div class="toolbar">
<div class="group"><svg><use href="#new"/></svg><svg><use href="#open"/></svg><svg><use href="#save"/></svg><svg><use href="#layout"/></svg><svg><use href="#manager"/></svg><svg><use href="#style"/></svg></div>
<div class="group wide"><svg class="pressed"><use href="#hand"/></svg><svg><use href="#pan"/></svg><svg><use href="#zin"/></svg><svg><use href="#zout"/></svg><svg><use href="#full"/></svg><svg><use href="#glens"/></svg><svg><use href="#lens"/></svg><svg><use href="#z11"/></svg><svg><use href="#zlast"/></svg><svg><use href="#glens"/></svg><svg><use href="#mapview"/></svg><svg><use href="#view3d"/></svg><svg><use href="#bookmark"/></svg><svg><use href="#bookmarks"/></svg><svg><use href="#clock"/></svg><svg><use href="#refresh"/></svg></div>
<div class="group wide"><svg><use href="#gsel"/></svg><i class="drop off"></i><svg><use href="#gform"/></svg><i class="drop off"></i><svg><use href="#desel"/></svg><i class="drop"></i><svg><use href="#selloc"/></svg></div>
<div class="group wide"><svg><use href="#info"/></svg><svg><use href="#table"/></svg><svg class="pressed"><use href="#gear"/></svg><svg><use href="#sigma"/></svg><svg><use href="#gmisc"/></svg><i class="drop off"></i><svg><use href="#ruler"/></svg><i class="drop"></i><svg><use href="#tip"/></svg><svg><use href="#glens"/></svg><i class="drop off"></i></div>
<div class="group wide"><svg><use href="#copyred"/></svg><svg><use href="#pin"/></svg><svg><use href="#lensred"/></svg><svg><use href="#lensred2"/></svg><svg><use href="#extent"/></svg><i class="drop"></i><svg><use href="#globe"/></svg><svg><use href="#xy"/></svg><svg><use href="#wrench"/></svg></div>
</div>

<div class="toolbar">
<div class="group"><svg><use href="#dsm"/></svg><svg><use href="#gpkg"/></svg><svg><use href="#vec"/></svg><svg><use href="#feather"/></svg><svg><use href="#chip"/></svg><svg><use href="#mesh"/></svg></div>
<div class="group near"><svg><use href="#virt"/></svg></div>
<div class="group wider"><svg><use href="#pencils"/></svg><svg><use href="#pencil"/></svg><svg><use href="#gsave"/></svg><svg><use href="#gdots"/></svg><svg><use href="#gnode"/></svg><i class="drop off"></i><svg><use href="#gbox"/></svg><svg><use href="#gsave"/></svg><svg><use href="#cut"/></svg><svg><use href="#gcopy"/></svg><svg><use href="#gpaste"/></svg><svg><use href="#gundo"/></svg><svg><use href="#gredo"/></svg></div>
<div class="group wide"><svg><use href="#gtag"/></svg><svg><use href="#ball"/></svg></div>
<div class="group near"><svg><use href="#tagblue"/></svg><svg><use href="#tagred"/></svg></div>
<div class="group near"><svg><use href="#gtag2"/></svg><svg><use href="#gtag2"/></svg><svg><use href="#gtag2"/></svg><svg><use href="#gtag2"/></svg><svg><use href="#gtag2"/></svg></div>
<div class="group apart"><svg><use href="#help"/></svg></div>
<div class="group wide"><svg><use href="#pole"/></svg></div>
<div class="group wide"><svg><use href="#magnet"/></svg><svg><use href="#gvec"/></svg><svg class="pressed"><use href="#gdots"/></svg></div>
<div class="spin tolerance"><span>12</span><i class="arrows"></i></div><div class="spin units"><span>px</span><i class="drop off"></i></div>
<div class="group"><svg><use href="#topo"/></svg><svg><use href="#trace"/></svg><svg><use href="#gcross"/></svg><svg><use href="#gx2"/></svg><i class="drop off"></i><svg><use href="#gx2"/></svg></div>
</div>

<div class="toolbar">
<div class="group"><svg><use href="#python"/></svg><svg><use href="#bug"/></svg><svg><use href="#kmz"/></svg><svg><use href="#hammer"/></svg><svg><use href="#beetle"/></svg><svg><use href="#raster"/></svg><svg><use href="#bluearrow"/></svg><i class="drop"></i><svg><use href="#target"/></svg></div>
<div class="group wide"><svg><use href="#plant"/></svg></div>
<div class="group wide"><svg><use href="#gedit"/></svg><svg><use href="#gedit"/></svg><i class="drop off"></i><svg><use href="#gdots"/></svg><svg><use href="#gedit"/></svg><i class="drop off"></i></div>
<div class="group wide"><svg><use href="#anno"/></svg><i class="drop"></i><svg><use href="#selarrow"/></svg><svg><use href="#polyan"/></svg><svg><use href="#linean"/></svg><svg><use href="#star"/></svg><svg><use href="#textan"/></svg></div>
<div class="group near"><svg><use href="#balloon"/></svg><i class="drop"></i></div>
<div class="group profile"><svg><use href="#chart"/></svg></div>
<div class="group wide"><svg><use href="#ad"/></svg><svg><use href="#gbox"/></svg><svg><use href="#gbox2"/></svg></div>
<div class="spin elevation"><span>0.000</span><i class="arrows"></i></div>
<div class="group"><svg><use href="#gbox3"/></svg><svg><use href="#gbox2"/></svg><svg><use href="#gbox"/></svg><svg><use href="#tminus"/></svg><svg><use href="#tplus"/></svg><svg><use href="#gbox3"/></svg><svg><use href="#gback"/></svg></div>
<div class="group wide"><svg><use href="#cloud"/></svg><svg><use href="#gcloud"/></svg></div>
<div class="group near"><svg><use href="#box"/></svg><svg><use href="#box"/></svg></div>
<div class="group near"><svg><use href="#tools"/></svg></div>
</div>

<main class="workspace">
<section class="dock layers">
<div class="dockhead"><span>Layers</span><svg><use href="#float"/></svg><svg><use href="#close"/></svg></div>
<div class="docktools"><svg><use href="#brush"/></svg><svg><use href="#group"/></svg><svg><use href="#eye"/></svg><svg><use href="#filter"/></svg><svg><use href="#epsilon"/></svg><i class="drop off"></i><svg><use href="#expand"/></svg><svg><use href="#collapse"/></svg><svg><use href="#remove"/></svg></div>
<div class="layertree">
<div class="layer"><i class="open"></i><span class="check">✓</span><svg><use href="#rast"/></svg><span class="name">GEBCO</span></div>
<div class="band">Band 1 (Gray)</div>
<div class="legend"><i class="ramp"></i><div class="range"><span>7,368.18</span><span>-10,008.4</span></div></div>
</div>
</section>

<section class="canvas">
<svg class="map" viewBox="255 158 562 384.500" preserveAspectRatio="none">
<defs>
<filter id="rough" x="255" y="158" width="562" height="385" filterUnits="userSpaceOnUse" color-interpolation-filters="sRGB"><feTurbulence type="fractalNoise" baseFrequency=".08" numOctaves="4" seed="4"/><feDisplacementMap in="SourceGraphic" scale="11" xChannelSelector="R" yChannelSelector="G"/></filter>
<filter id="soft" x="255" y="158" width="562" height="385" filterUnits="userSpaceOnUse" color-interpolation-filters="sRGB"><feGaussianBlur stdDeviation="2" result="b"/><feTurbulence type="fractalNoise" baseFrequency=".1" numOctaves="4" seed="9" result="n"/><feDisplacementMap in="b" in2="n" scale="14" xChannelSelector="R" yChannelSelector="G"/></filter>
<filter id="melt" x="255" y="158" width="562" height="385" filterUnits="userSpaceOnUse" color-interpolation-filters="sRGB"><feGaussianBlur stdDeviation="2.500" result="b"/><feTurbulence type="fractalNoise" baseFrequency=".07" numOctaves="4" seed="5" result="n"/><feDisplacementMap in="b" in2="n" scale="18" xChannelSelector="R" yChannelSelector="G"/></filter>
<filter id="haze" x="255" y="158" width="562" height="385" filterUnits="userSpaceOnUse"><feGaussianBlur stdDeviation="9"/></filter>
<filter id="snow" x="255" y="158" width="562" height="385" filterUnits="userSpaceOnUse" color-interpolation-filters="sRGB"><feGaussianBlur stdDeviation=".7" result="b"/><feTurbulence type="fractalNoise" baseFrequency=".12" numOctaves="3" seed="6" result="n"/><feDisplacementMap in="b" in2="n" scale="7" xChannelSelector="R" yChannelSelector="G"/></filter>
<filter id="grain" x="255" y="158" width="562" height="385" filterUnits="userSpaceOnUse"><feTurbulence type="fractalNoise" baseFrequency=".5 .7" numOctaves="2" seed="2"/><feColorMatrix values="0 0 0 0 1  0 0 0 0 1  0 0 0 0 1  1.200 0 0 0 -.55"/></filter>
<clipPath id="west"><path d="M319 158H383L397 165 414 178 416 188 400 186 385 190 400 208 413 213 428 212 425 222 410 228 407 234 407 257 390 243 378 250 373 260 360 267 350 283 347 293 338 303 317 302 323 313 318 333 287 323 295 337 275 345 283 360 282 378 292 395 298 425 317 435 347 442 353 458 373 470 388 492 388 515 413 543H255V264L270 238 290 206 314 174z"/></clipPath>
<clipPath id="indian"><path d="M485 423 497 433 507 432 523 412 537 395 545 382 563 377 580 377 582 392 597 395 610 412 627 385 628 415 642 425 667 413 670 405 645 373 670 378 673 358 708 345 707 375 717 388 743 408 763 420 817 430V543H503L517 518 510 498 520 477 503 468 490 448z"/></clipPath>
</defs>
<rect x="255" y="158" width="562" height="385" fill="#8e8f8d"/>
<g filter="url(#haze)" fill="#9f9f9d">
<path d="M300 350 350 290 430 310 470 340 490 390 490 430 520 480 500 543H420L385 470 300 410z" opacity=".75"/>
<path d="M495 310h70l15 55-60 30-25-30z" opacity=".8"/>
<path d="M600 340h90l10 20-50 50-50-30zM640 230h177v50L720 275z" opacity=".3"/>
<path d="M460 210l50-12 30 14-20 20-60 10zM690 280l50 10 30 60-50-30z" opacity=".5"/>
</g>
<g filter="url(#rough)">
<g fill="#606060" stroke="#6b7a84" stroke-width="3">
<path d="M319 150H383L397 165 414 178 416 188 400 186 385 190 400 208 413 213 428 212 425 222 410 228 407 234 407 257 390 243 378 250 373 260 360 267 350 283 347 293 338 303 317 302 323 313 318 333 287 323 295 337 275 345 283 360 282 378 292 395 298 425 317 435 347 442 353 458 373 470 388 492 388 515 413 552H240V274L270 240 290 208 314 176z"/>
<path d="M427 150H477L487 188 463 187 453 180 453 197 443 197 430 180z"/>
<path d="M615 150 633 166 653 169 670 163 697 169 723 179 760 183H830V150z"/>
<path d="M485 423 497 433 507 432 523 412 537 395 545 382 563 377 580 377 582 392 597 395 610 412 627 385 628 415 642 425 667 413 670 405 645 373 670 378 673 358 708 345 707 375 717 388 743 408 763 420 830 430V555H503L517 518 510 498 520 477 503 468 490 448z"/>
<path d="M790 293 830 284V303L797 312zM780 344 803 338 830 318V385L805 362 790 349z" stroke-width="2"/>
</g>
<g fill="none" stroke="#7c7959" stroke-width="1" opacity=".9">
<path d="M322 160H350L372 167 392 174 412 182M280 228 300 212 310 202"/>
<path d="M284 362 284 378 294 395 299 424 318 434 348 441 355 458 374 469 390 491"/>
<path d="M474 160 486 187M622 160 634 166 655 169 669 164 697 169 725 180 817 183"/>
<path d="M581 378 584 392 598 396 612 410 627 388M674 360 707 347M719 389 743 407 763 419 817 428"/>
<path d="M486 425 491 448 504 466 520 476M512 498 519 520"/>
</g>
<g stroke="#6b7a84" stroke-width="1.300" fill="#5d5e5e">
<path d="M382 273h15l8 10 12-9 6 6-10 15 14-8 10 10-24 5-20-5z"/>
<path d="M437 302 447 310 453 320 470 322 495 329 490 333 470 332 450 325 437 316z"/>
<path d="M477 295 495 294 505 300 507 306 490 303z" fill="#77755b"/>
<path d="M498 405 510 401 527 403 524 410 505 410z" fill="#666b69"/>
<path d="M765 350l15-4 6 12-11 11-7-8zM792 371l9 4 4 7-13-6zM797 384l25-8v13l-16 3zM707 360l12-4 6 5-12 12z"/>
</g>
<path d="M482 341 480 352 480 367 487 378 492 388" stroke="#667680" stroke-width="2" fill="none"/>
<path d="M804 256 820 260V267z" fill="#68777f"/>
<path d="M385 190 400 186 430 195 436 208 414 212 400 205z" fill="#6c7981"/>
<path d="M384 161 410 172 440 207M583 394 600 398 612 414 626 388" fill="none" stroke="#6c7b84" stroke-width="4.500"/>
<path d="M537 389 550 373 578 374" fill="none" stroke="#6c7b84" stroke-width="3"/>
</g>
<g clip-path="url(#west)"><g filter="url(#melt)">
<path d="M285 205 350 190 400 215 412 225 408 260 388 245 372 258 340 270 330 290 250 320V255z" fill="#535353"/>
<path d="M330 195 360 190 400 215 405 245 370 235 310 235z" fill="#4c4c4c"/>
<path d="M240 265 310 250 330 236 375 235 360 250 320 265 308 300 280 290 240 300z" fill="#434343"/>
<path d="M240 330 275 330 262 345 277 385 292 400 297 430 345 455 385 495 380 520 345 550H240z" fill="#525252"/>
<path d="M240 320 268 325 258 345 280 390 270 420 240 430zM240 462 315 465 345 480 372 500 375 520 345 555H240z" fill="#434343"/>
<path d="M372 530 390 521 410 550H370z" fill="#454545"/>
</g>
<g filter="url(#soft)" fill="none" stroke="#858685"><path d="M315 275 350 258 365 258M310 290 338 301M270 293 290 304M260 465 290 472M330 448 340 455" stroke-width="3"/><path d="M308 250 345 233 390 234M320 272 345 260" stroke="#636363" stroke-width="3"/><path d="M280 232 295 248M265 250 280 260" stroke="#7e8890" stroke-width="4"/></g>
</g>
<g clip-path="url(#indian)"><g filter="url(#melt)">
<path d="M488 430 510 435 535 400 580 400 630 430 700 395 712 380 830 422V550H520L530 500 500 465z" fill="#525252"/>
<path d="M508 430 532 410 545 450 530 460 505 455zM650 450 690 440 722 385 830 422V520L730 515 700 490 650 490z" fill="#434343"/>
<path d="M590 485 640 525 625 543 590 530zM535 520 570 535 565 550H540zM790 500h42v25h-40z" fill="#434343"/>
<path d="M515 490 540 500 560 530 595 530 590 550H505z" fill="#636664"/>
</g>
<g filter="url(#soft)" fill="none" stroke-linecap="round">
<path d="M702 380 702 420 712 465 727 505 735 525M590 400 620 440 640 470 670 510 710 543M735 517 780 517" stroke="#6c6d6d" stroke-width="6"/>
<path d="M537 415 585 435 620 470 650 500 690 543" stroke="#626262" stroke-width="12"/>
<path d="M704 430 712 470 728 510" stroke="#80817e" stroke-width="2.500"/>
<path d="M592 412 615 435 640 465M560 458 600 475 617 495 615 505" stroke="#929593" stroke-width="4"/>
<path d="M520 468 570 475M740 435 770 430M765 475 800 490" stroke="#6a6b6a" stroke-width="3"/>
</g>
<path d="M533 480 555 475 572 477 583 492 585 522 573 512 550 495z" fill="#959694" stroke="#6b7a84" stroke-width="1.500" filter="url(#rough)"/>
<path d="M576 526 588 524 596 543H574z" fill="#6b7474" filter="url(#rough)"/>
</g>
<path d="M830 455 808 470 810 486 830 502z" fill="#979896" stroke="#6b7a84" stroke-width="3" filter="url(#rough)"/>
<g filter="url(#soft)" fill="none" stroke="#b7b7b5" stroke-linecap="round" stroke-linejoin="round">
<path d="M663 200 685 225 711 243 755 230 820 234" stroke="#a5a6a4" stroke-width="6"/>
<path d="M714 250 770 254 800 280M660 270 720 262 740 258" stroke="#9d9e9c" stroke-width="6"/>
<path d="M370 265 405 265 413 258M342 305 375 277M415 273 440 280 460 300M455 278 475 285M393 240 403 250" stroke="#a6a6a4" stroke-width="3"/>
<path d="M383 255 392 246 402 258" stroke="#999a98" stroke-width="13"/>
<path d="M480 310 500 317 520 305 545 325 580 330 590 317M512 298 523 294" stroke-width="8" opacity=".65"/>
<path d="M540 325 560 360 575 370 586 360 587 322M565 312 575 350" stroke-width="8" opacity=".5"/>
<path d="M495 350 500 385 523 397M470 385 475 405M415 380 422 383M430 440 438 435 475 430M433 445 470 465 485 483" stroke-width="4" opacity=".5"/>
<path d="M707 295 725 320 745 335M685 320 705 330M655 275 680 265 700 270" stroke-width="7" opacity=".7"/>
<path d="M721 372 735 395 760 411 820 420M782 345 810 370" stroke-width="4" opacity=".6"/>
<path d="M572 195 577 182M625 203 640 225" stroke-width="5" opacity=".3"/>
<path d="M630 405 650 408M357 423 380 418M490 205 510 200" stroke-width="10" opacity=".35"/>
</g>
<g filter="url(#snow)"><path d="M587 317 610 306 640 299 660 290 680 282 710 286 712 303 695 305 687 320 673 327 653 320 633 310 607 317z" fill="#cdcdcb"/><path d="M590 312 612 303 635 297 652 290 668 279" fill="none" stroke="#bdbdbb" stroke-width="1.500"/><path d="M645 304 675 294 700 292 687 307 673 323 652 315z" fill="#dcdcda" opacity=".8"/><path d="M637 298 655 290 667 282 675 280 660 296 645 301z" fill="#858684"/></g>
<path d="M255 158H318.500C318 175 305 188 292 205S268 238 263 252L255 264z" fill="#8c8d8b"/>
<path d="M256 265v6M801 342l4-3M812 367l6 7" stroke="#000" stroke-width="1.500"/><path d="M760 422l17 2" stroke="#000" stroke-width="1.500" stroke-dasharray="1.500 2"/>
<rect x="255" y="158" width="562" height="385" filter="url(#grain)" opacity=".22"/>
<path d="M475.500 399.500q4-3 8 0l-.5 5-1.500 2h-3.500l-2-3z" fill="#080808" stroke="#ccc" stroke-width=".8"/>
</svg>
</section>

<aside class="right">
<section class="dock processing">
<div class="dockhead"><span>Processing Toolbox</span><svg><use href="#float"/></svg><svg><use href="#close"/></svg></div>
<div class="docktools"><svg><use href="#models"/></svg><svg><use href="#rlang"/></svg><svg><use href="#python"/></svg><svg><use href="#clock"/></svg><svg class="pressed"><use href="#doc"/></svg><svg class="spaced"><use href="#gbubble"/></svg><svg class="spaced"><use href="#wrench"/></svg></div>
<div class="search"><svg><use href="#search"/></svg><span>Search…</span></div>
<div class="algbox"><ul class="algs">
<li><svg><use href="#recent"/></svg>Recently used</li><li><svg><use href="#q"/></svg>Cartography</li><li><svg><use href="#q"/></svg>Database</li><li><svg><use href="#q"/></svg>File tools</li><li><svg><use href="#q"/></svg>GPS</li><li><svg><use href="#q"/></svg>Interpolation</li><li><svg><use href="#q"/></svg>Layer tools</li><li><svg><use href="#q"/></svg>Mesh</li><li><svg><use href="#q"/></svg>Network analysis</li><li><svg><use href="#q"/></svg>Plots</li><li><svg><use href="#q"/></svg>Raster analysis</li><li><svg><use href="#q"/></svg>Raster creation</li><li><svg><use href="#q"/></svg>Raster terrain analysis</li>
</ul><div class="scroll"><i class="up"></i><div class="thumb"></div><i class="down"></i></div></div>
</section>
<section class="dock results">
<div class="dockhead"><span>Results Viewer</span><svg><use href="#float"/></svg><svg><use href="#close"/></svg></div>
<div class="pane upper"></div><div class="pane lower"></div>
</section>
</aside>
</main>

<footer class="status">
<div class="locator"><svg><use href="#search"/></svg><span>Type to locate (Ctrl+K)</span></div>
<span class="label coord">Coordinate</span><div class="field coordval">600,-645</div><svg class="sicon"><use href="#mouse"/></svg>
<span class="label scale">Scale</span><div class="field scaleval"><span>1:417751520</span><i class="drop cell"></i></div>
<svg class="sicon locked"><use href="#lock"/></svg><span class="label magnifier">Magnifier</span><div class="field magval"><span>100%</span><i class="arrows"></i></div>
<span class="label rotation">Rotation</span><div class="field rotval"><span>0.0 °</span><i class="arrows"></i></div>
<span class="check box">✓</span><span class="label render">Render</span><svg class="sicon crs"><use href="#crs"/></svg><span class="label epsg">EPSG:4326</span><svg class="sicon msg"><use href="#msg"/></svg>
</footer>
</div>
</body>
</html>
```

FILE: styles.css
```css
* { box-sizing: border-box; }
html, body { margin: 0; overflow: hidden; }
body { font: 7.450px/1 "Noto Sans", sans-serif; color: #222527; background: #efefef; }
.sprite { position: absolute; width: 0; height: 0; }
.window { width: 1024px; height: 623px; display: flex; flex-direction: column; }
.kmz { font: bold 7px "Noto Sans", sans-serif; fill: #3b78b4; }
.ad { font: italic bold 8.5px "Noto Sans", sans-serif; fill: #c1232f; }

.titlebar { height: 20px; flex: none; display: flex; align-items: center; background: linear-gradient(#f4f3f2 0, #dedbd8 2px, #d9d6d3 100%); padding: 0 6px 0 14px; }
.title { flex: 1; text-align: center; font-size: 7.550px; font-weight: 600; color: #3c3c3c; }
.winclose { font: bold 8px "DejaVu Sans", sans-serif; color: #444; }
.menubar { height: 12.500px; flex: none; display: flex; align-items: center; gap: 8.300px; padding-left: 5.500px; padding-bottom: 1px; font-size: 7.550px; }
.menubar u { text-underline-offset: 1px; text-decoration-thickness: .7px; }

.toolbar { height: 20.600px; flex: none; display: flex; align-items: center; padding-left: 6.700px; background: linear-gradient(#fdfdfd, #efefef); border-bottom: 1px solid #d2d2d2; }
.group { display: flex; align-items: center; flex: none; }
.group svg { width: 17.600px; height: 18px; padding: 2.200px 2px; flex: none; }
.wide { margin-left: 8.700px; }
.wider { margin-left: 11.400px; }
.near { margin-left: 3.900px; }
.apart { margin-left: 17.300px; }
.profile { margin-left: 106.700px; }
.pressed { background: #d8d8d8; border: 1px solid #bdbdbd; border-radius: 1px; }
.group svg.pressed { padding: 1.200px 1px; }
.drop { width: 6.200px; height: 10px; display: flex; align-items: center; justify-content: center; flex: none; }
.drop::after { content: ""; border: 2px solid transparent; border-top: 2.300px solid #333; border-bottom: 0; }
.drop.off::after { border-top-color: #bbb; }
.spin { height: 14px; display: flex; align-items: center; justify-content: space-between; border: 1px solid #c9c9c9; border-radius: 2px; background: #f3f3f3; color: #aaa; font-size: 7.800px; padding-left: 2px; flex: none; }
.tolerance { width: 57px; }
.units { width: 59px; padding-right: 2px; }
.elevation { width: 48px; font-size: 8.600px; }
.arrows { width: 6px; height: 100%; display: flex; flex-direction: column; align-items: center; justify-content: center; gap: 2.500px; border-left: 1px solid #ddd; flex: none; }
.arrows::before { content: ""; border: 1.700px solid transparent; border-bottom: 2px solid #888; border-top: 0; }
.arrows::after { content: ""; border: 1.700px solid transparent; border-top: 2px solid #888; border-bottom: 0; }

.workspace { flex: 1; min-height: 0; display: flex; padding-top: .500px; }
.dock { display: flex; flex-direction: column; }
.layers { width: 238px; }
.dockhead { height: 11.500px; flex: none; display: flex; align-items: center; gap: 0; padding: 0 .500px 0 2px; }
.dockhead span { flex: 1; }
.dockhead svg { width: 8px; height: 8px; }
.docktools { height: 15.500px; flex: none; display: flex; align-items: center; padding-left: 2px; }
.docktools svg { width: 13.400px; height: 13px; padding: 2px; flex: none; }
.docktools .drop { width: 5px; }
.layers .dockhead svg { width: 7.700px; }
.layertree { flex: 1; border: 1px solid #c2c2c2; background: #fff; }
.layer { height: 11px; display: flex; align-items: center; background: linear-gradient(90deg, #fff 33px, #dce9f5 33px); padding-left: 3px; }
.open { border: 2px solid transparent; border-top: 2.500px solid #666; border-bottom: 0; margin-right: 4.500px; }
.check { width: 7.500px; height: 7.500px; border: .500px solid #ccc; background: #fff; font: bold 7px/7px "DejaVu Sans", sans-serif; text-align: center; color: #111; }
.layer svg { width: 8px; height: 8px; margin: 0 3px 0 4px; }
.name { font-weight: 600; text-decoration: underline; text-underline-offset: 1px; }
.band { height: 11px; line-height: 10px; padding-left: 22.500px; }
.legend { display: flex; gap: 5px; padding-left: 22.500px; }
.ramp { width: 9px; height: 50px; background: linear-gradient(#f5f5f5, #111 82%, #000); }
.range { height: 50px; display: flex; flex-direction: column; justify-content: space-between; padding: 1px 0 1px; font-weight: 500; }

.canvas { width: 591px; margin-left: 3px; background: #fff; border: 1px solid #c8c8c8; padding: 62px 0 0 13px; }
.map { display: block; width: 562px; height: 384.500px; }

.right { width: 189.500px; margin-left: 2.500px; display: flex; flex-direction: column; }
.processing { height: 189.500px; flex: none; }
.processing .docktools svg.spaced { margin-left: 4px; }
.processing .docktools svg.pressed { padding: 1px; }
.search { height: 14px; display: flex; align-items: center; gap: 3px; padding-left: 4px; border: 1px solid #c2c2c2; background: #fff; color: #888; font-size: 7.600px; flex: none; }
.search svg { width: 7.500px; height: 7.500px; }
.algbox { flex: 1; min-height: 0; display: flex; border: 1px solid #c2c2c2; background: #fff; }
.algs { list-style: none; margin: 0; padding: 0 0 0 4px; flex: 1; }
.algs li { height: 11.230px; display: flex; align-items: center; }
.algs li::before { content: ""; border: 2px solid transparent; border-left: 2.500px solid #555; border-right: 0; margin-right: 5.500px; }
.algs svg { width: 8.800px; height: 8.800px; margin-right: 3px; }
.scroll { width: 7.500px; display: flex; flex-direction: column; align-items: center; background: #d9d9d9; border-left: 1px solid #ccc; }
.thumb { width: 100%; height: 57px; background: #fafafa; border-bottom: 1px solid #c8c8c8; margin-bottom: auto; }
.up, .down { width: 100%; height: 8px; background: #fafafa; display: flex; align-items: center; justify-content: center; flex: none; }
.up::after { content: ""; border: 1.800px solid transparent; border-bottom: 2px solid #444; border-top: 0; }
.down::after { content: ""; border: 1.800px solid transparent; border-top: 2px solid #444; border-bottom: 0; }
.results { flex: 1; padding-top: 2.500px; }
.pane { border: 1px solid #c8c8c8; background: #fff; }
.upper { height: 152px; flex: none; margin-bottom: 2.500px; }
.lower { flex: 1; }

.status { height: 18px; flex: none; display: flex; align-items: center; padding-left: 2px; font-size: 6.400px; }
.locator { width: 142px; height: 14.500px; display: flex; align-items: center; gap: 4px; padding-left: 4px; border: 1px solid #bbb; background: #fff; color: #777; font-size: 7.700px; border-radius: 1px; }
.locator svg { width: 7px; height: 7px; }
.label, .field, .field span { white-space: nowrap; }
.label { flex: none; }
.coord { width: 34px; margin-left: 432.500px; }
.field { height: 13.500px; display: flex; align-items: center; justify-content: space-between; border: 1px solid #c2c2c2; border-radius: 1.500px; background: #fff; padding-left: 2px; flex: none; }
.coordval { width: 35px; justify-content: center; padding: 0; }
.sicon { width: 8.500px; height: 8.500px; margin-left: 2px; flex: none; }
.scale { width: 17.500px; margin-left: 7px; }
.scaleval { width: 53px; padding-left: 1px; }
.drop.cell { width: 10px; height: 100%; border-left: 1px solid #ccc; }
.locked { width: 7px; height: 8px; margin-left: 6px; }
.magnifier { width: 28px; margin-left: 4.500px; }
.magval { width: 49px; margin-left: 1px; }
.rotation { width: 25px; margin-left: 5.500px; }
.rotval { width: 50px; margin-left: 4.500px; }
.box { margin-left: 4.500px; flex: none; }
.render { width: 21px; margin-left: 2.500px; }
.crs { margin-left: 8.500px; width: 7.500px; }
.epsg { width: 32px; margin-left: 1px; }
.msg { margin-left: 12px; width: 9px; }
```
